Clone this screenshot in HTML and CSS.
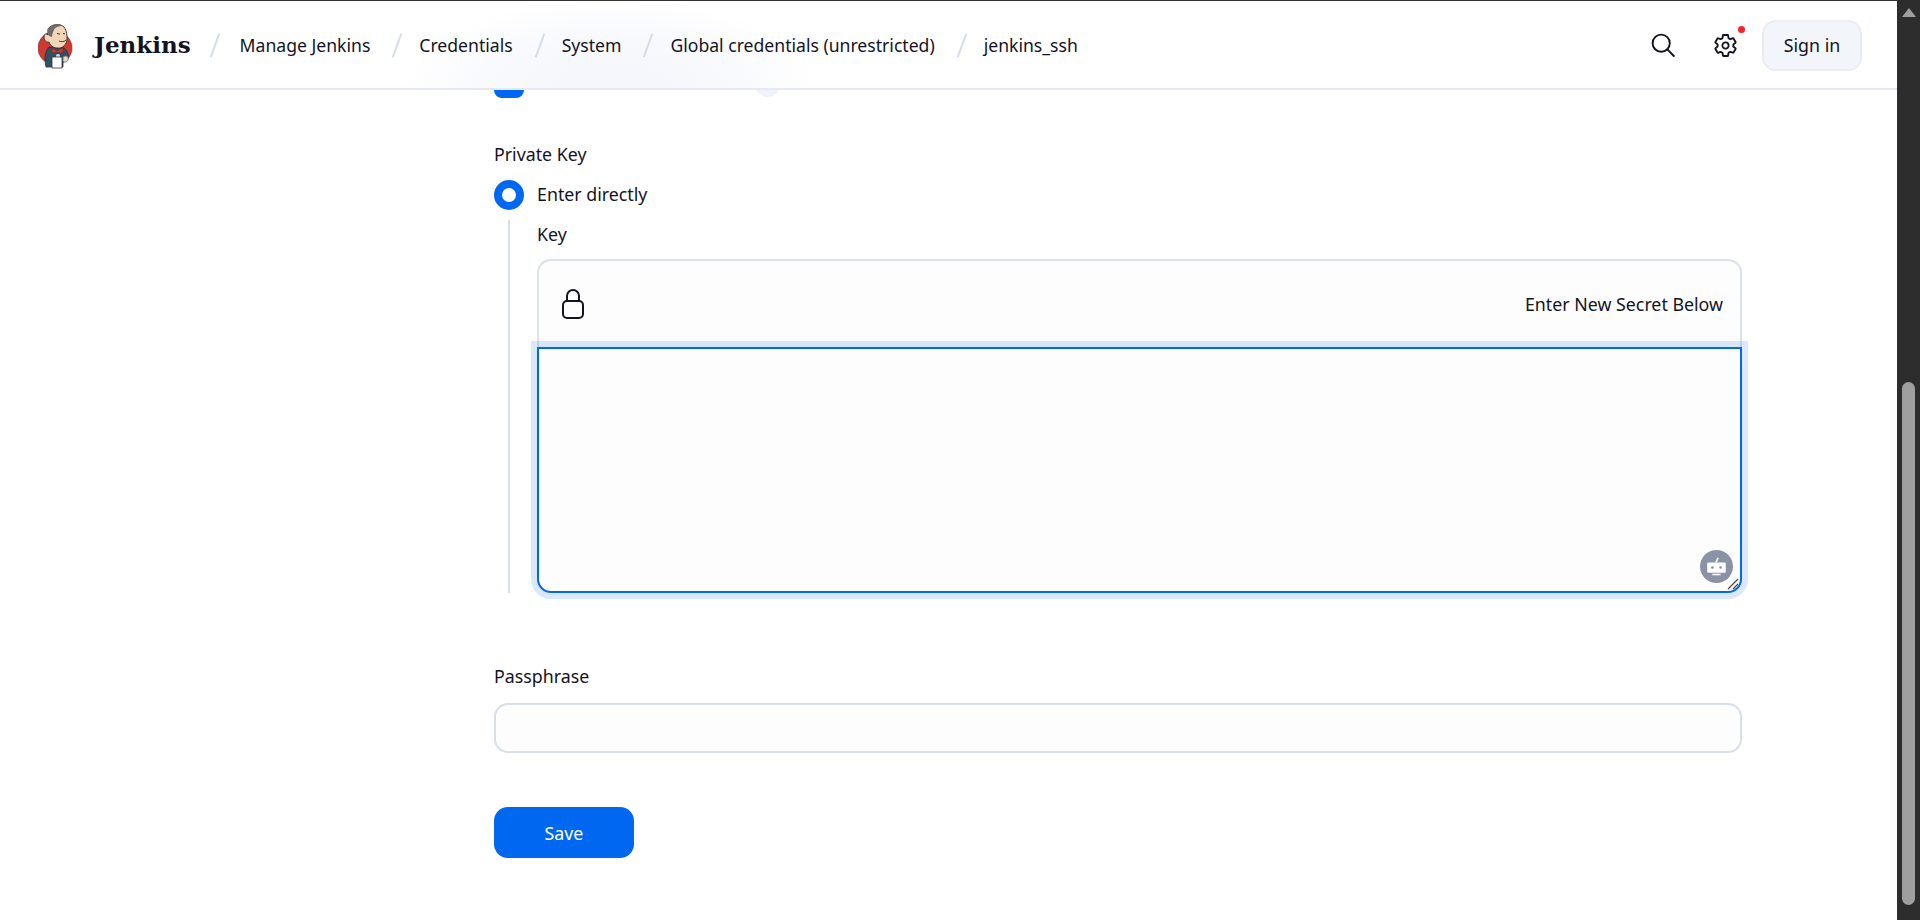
FILE: index.html
```html
<!DOCTYPE html>
<html lang="en">
<head>
    <meta charset="UTF-8">
    <meta name="viewport" content="width=device-width, initial-scale=1.0">
    <title>jenkins_ssh - Jenkins</title>
    <link rel="stylesheet" href="styles.css">
</head>
<body>
    <div class="page">
        <header class="top-nav">
            <svg class="logo" viewBox="0 0 36 48" aria-hidden="true">
                <ellipse cx="17" cy="27" rx="17" ry="16.5" fill="#d33833" stroke="#5a2a28" stroke-width="0.6"/>
                <path d="M8 46C6 38 7 30 11 26l15 1c4 3 5 8 4 11l-5 2v6z" fill="#335061" stroke="#26343e" stroke-width="0.8"/>
                <path d="M10 8c3-5 12-6 16-2 3 4 3 9 3 12 0 5-4 10-10 9-4 0-7-3-8-6-3 1-5-2-5-5 0-3 2-4 4-2z" fill="#f0d6b7" stroke="#2f2a28" stroke-width="0.9"/>
                <path d="M10 8c3-5 11-6 15-3-4 0-8 1-9 4-1 2-2 4-2 7l-3-1c-1-2-2-4-1-7z" fill="#6d6b6d"/>
                <path d="M19 12.5l3 .6M25 12.5l2 .3M21 20c2 1 5 1 7-1" fill="none" stroke="#3a2f2a" stroke-width="1"/>
                <path d="M14 27l5 3 6-3v5l-6-1-5 1z" fill="#d33833" stroke="#7a1f1c" stroke-width="0.5"/>
                <circle cx="20" cy="35" r="2" fill="#d9e1e8"/>
                <path d="M14 36h10v11H14z" fill="#fff" stroke="#333" stroke-width="0.8"/>
                <path d="M25 36c3-2 6-1 5 3-1 2-4 3-5 1z" fill="#f0d6b7" stroke="#49728b" stroke-width="0.8"/>
            </svg>
            <a class="brand" href="#">Jenkins</a>
            <nav class="crumbs">
                <a href="#">Manage Jenkins</a>
                <a href="#">Credentials</a>
                <a href="#">System</a>
                <a href="#">Global credentials (unrestricted)</a>
                <a href="#">jenkins_ssh</a>
            </nav>
            <div class="nav-actions">
                <svg class="nav-icon" viewBox="0 0 24 24" aria-hidden="true">
                    <circle cx="10.2" cy="10.2" r="8.6"/>
                    <path d="M16.6 16.6l6.2 6.4"/>
                </svg>
                <span class="gear">
                    <svg class="gear-icon" viewBox="0 0 512 512" aria-hidden="true">
                        <path d="M262.29 192.31a64 64 0 1 0 57.4 57.4 64.13 64.13 0 0 0-57.4-57.4zM416.39 256a154.34 154.34 0 0 1-1.53 20.79l45.21 35.46a10.81 10.81 0 0 1 2.45 13.75l-42.77 74a10.81 10.81 0 0 1-13.14 4.59l-44.9-18.08a16.11 16.11 0 0 0-15.17 1.75A164.48 164.48 0 0 1 325 400.8a15.94 15.94 0 0 0-8.82 12.14l-6.73 47.89a11.08 11.08 0 0 1-10.68 9.17h-85.54a11.11 11.11 0 0 1-10.69-8.87l-6.72-47.82a16.07 16.07 0 0 0-9-12.22 155.3 155.3 0 0 1-21.46-12.57 16 16 0 0 0-15.11-1.71l-44.89 18.07a10.81 10.81 0 0 1-13.14-4.58l-42.77-74a10.8 10.8 0 0 1 2.45-13.75l38.21-30a16.05 16.05 0 0 0 6-14.08c-.36-4.17-.58-8.33-.58-12.5s.21-8.27.58-12.35a16 16 0 0 0-6.07-13.94l-38.19-30A10.81 10.81 0 0 1 49.48 186l42.77-74a10.81 10.81 0 0 1 13.14-4.59l44.9 18.08a16.11 16.11 0 0 0 15.17-1.75A164.48 164.48 0 0 1 187 111.2a15.94 15.94 0 0 0 8.82-12.14l6.73-47.89A11.08 11.08 0 0 1 213.23 42h85.54a11.11 11.11 0 0 1 10.69 8.87l6.72 47.82a16.07 16.07 0 0 0 9 12.22 155.3 155.3 0 0 1 21.46 12.57 16 16 0 0 0 15.11 1.71l44.89-18.07a10.81 10.81 0 0 1 13.14 4.58l42.77 74a10.8 10.8 0 0 1-2.45 13.75l-38.21 30a16.05 16.05 0 0 0-6.05 14.08c.33 4.14.55 8.3.55 12.47z"/>
                    </svg>
                    <span class="gear-dot"></span>
                </span>
                <a class="sign-in" href="#">Sign in</a>
            </div>
        </header>

        <main class="form">
            <div class="clipped-row">
                <span class="checkbox"></span>
                <span class="help-dot"></span>
            </div>

            <label class="field-label private-key">Private Key</label>
            <div class="radio-row">
                <span class="radio"></span>
                <span class="radio-text">Enter directly</span>
            </div>
            <div class="radio-body">
                <label class="field-label">Key</label>
                <div class="secret-box">
                    <div class="secret-head">
                        <svg class="lock" viewBox="0 0 24 32" aria-hidden="true">
                            <path d="M6 13V8a6 6 0 0 1 12 0v5"/>
                            <rect x="2" y="13" width="20" height="17" rx="4"/>
                        </svg>
                        <span>Enter New Secret Below</span>
                    </div>
                    <div class="secret-input">
                        <textarea></textarea>
                        <span class="bot">
                            <svg viewBox="0 0 32 32" aria-hidden="true">
                                <path class="bot-stem" d="M15.5 12l2-4.5"/>
                                <rect class="bot-head" x="7" y="12" width="18" height="10" rx="1"/>
                                <circle class="bot-eye" cx="12" cy="17" r="1.3"/>
                                <circle class="bot-eye" cx="20" cy="17" r="1.3"/>
                                <rect class="bot-head" x="12" y="23" width="8" height="1.5"/>
                            </svg>
                        </span>
                        <svg class="grip" viewBox="0 0 12 12" aria-hidden="true">
                            <path d="M1 11L11 1M6 11l5-5"/>
                        </svg>
                    </div>
                </div>
            </div>

            <label class="field-label passphrase">Passphrase</label>
            <input class="text-input" type="text">

            <button class="save-btn" type="button">Save</button>
        </main>
    </div>

    <div class="scrollbar">
        <span class="scroll-up"></span>
        <span class="scroll-thumb"></span>
    </div>
</body>
</html>
```

FILE: styles.css
```css
* {
    box-sizing: border-box;
}
html, body {
    height: 100%;
    overflow: hidden;
}
body {
    margin: 0;
    display: flex;
    font-family: "Noto Sans", Arial, sans-serif;
    font-size: 17.8px;
    line-height: 24px;
    color: #14141f;
    background-color: #fff;
}
a {
    color: inherit;
    text-decoration: none;
}
.page {
    flex: 1;
    min-width: 0;
}

/* header */
.top-nav {
    display: flex;
    align-items: center;
    height: 90px;
    padding: 1px 35px 0 38px;
    border-top: 1px solid #333;
    border-bottom: 2px solid #e6e9f2;
    background: radial-gradient(ellipse 210px 90px at 610px 100%, #f4f6fc 0%, #f8f9fd 55%, #fff 100%);
}
.logo {
    width: 36px;
    height: 48px;
    margin-right: 20px;
}
.brand {
    font-family: "DejaVu Serif", Georgia, serif;
    font-size: 23px;
    font-weight: bold;
}
.crumbs {
    display: flex;
    margin-left: 19px;
    font-size: 17.6px;
}
.crumbs a {
    display: flex;
    align-items: center;
}
.crumbs a::before {
    content: "";
    width: 2px;
    height: 25px;
    margin: 0 24px 0 4px;
    background-color: #d3dcea;
    transform: rotate(20deg);
}
.crumbs a + a::before {
    margin: 0 21px 0 26px;
}
.nav-actions {
    display: flex;
    align-items: center;
    margin-left: auto;
}
.nav-icon {
    display: block;
    width: 24px;
    height: 24px;
    fill: none;
    stroke: #14141f;
    stroke-width: 1.9;
    stroke-linecap: round;
}
.gear {
    position: relative;
    margin-left: 38px;
}
.gear-icon {
    display: block;
    width: 25px;
    height: 25px;
    fill: none;
    stroke: #14141f;
    stroke-width: 38;
    stroke-linejoin: round;
}
.gear-dot {
    position: absolute;
    top: -7px;
    right: -7px;
    width: 7px;
    height: 7px;
    border-radius: 50%;
    background-color: #f5222d;
}
.sign-in {
    width: 100px;
    height: 51px;
    margin-left: 24px;
    line-height: 47px;
    text-align: center;
    background-color: #f2f5f9;
    border: 2px solid #e9edf3;
    border-radius: 14px;
}

/* form */
.form {
    display: flex;
    flex-direction: column;
    align-items: flex-start;
    width: 1248px;
    margin-left: 494px;
}
.clipped-row {
    display: flex;
    height: 8px;
    overflow: hidden;
}
.checkbox {
    width: 30px;
    height: 30px;
    margin-top: -22px;
    background-color: #0067f0;
    border-radius: 8px;
}
.help-dot {
    width: 25px;
    height: 25px;
    margin: -18px 0 0 231px;
    background-color: #eff2f7;
    border-radius: 50%;
}
.private-key {
    margin-top: 44px;
}
.radio-row {
    display: flex;
    align-items: center;
    gap: 13px;
    height: 30px;
    margin-top: 14px;
}
.radio {
    width: 30px;
    height: 30px;
    border: 8.5px solid #0067f0;
    border-radius: 50%;
    background-color: #fff;
}
.radio-text {
    margin-bottom: 2px;
}
.radio-body {
    width: 1234px;
    margin: 10px 0 0 14px;
    padding: 2px 0 0 27px;
    border-left: 2px solid #d8dfea;
}
.secret-box {
    margin-top: 13px;
}
.secret-head {
    display: flex;
    align-items: center;
    justify-content: space-between;
    height: 88px;
    padding: 0 17px 0 22px;
    background-color: #fdfdfd;
    border: 2px solid #dbe2ec;
    border-bottom: none;
    border-radius: 14px 14px 0 0;
}
.lock {
    width: 24px;
    height: 32px;
    fill: none;
    stroke: #14141f;
    stroke-width: 2;
}
.secret-input {
    position: relative;
    height: 246px;
}
.secret-input textarea {
    display: block;
    width: 100%;
    height: 100%;
    background-color: #fdfdfd;
    border: 2px solid #0067f0;
    border-radius: 0 0 14px 14px;
    box-shadow: 0 0 0 6px rgba(0, 103, 240, 0.15);
    outline: none;
    resize: none;
}
.bot {
    position: absolute;
    right: 9px;
    bottom: 10px;
    width: 33px;
    height: 33px;
    border-radius: 50%;
    background-color: #8a93a5;
}
.bot svg {
    display: block;
}
.bot-head {
    fill: #fff;
}
.bot-eye {
    fill: #8a93a5;
}
.bot-stem {
    fill: none;
    stroke: #fff;
    stroke-width: 1.6;
}
.grip {
    position: absolute;
    right: 3px;
    bottom: 3px;
    width: 12px;
    height: 12px;
    fill: none;
    stroke: #4a4a4a;
    stroke-width: 1.2;
}
.passphrase {
    margin-top: 71px;
}
.text-input {
    width: 100%;
    height: 50px;
    margin-top: 15px;
    background-color: #fdfdfd;
    border: 2px solid #d9deeb;
    border-radius: 14px;
}
.save-btn {
    width: 140px;
    height: 51px;
    margin-top: 54px;
    font-family: inherit;
    font-size: 17.8px;
    color: #fff;
    background-color: #0067f0;
    border: none;
    border-radius: 14px;
}

/* window scrollbar */
.scrollbar {
    display: flex;
    flex-direction: column;
    align-items: center;
    width: 23px;
    padding-top: 8px;
    background-color: #2d2d2d;
}
.scroll-up {
    width: 0;
    height: 0;
    border-left: 7px solid transparent;
    border-right: 7px solid transparent;
    border-bottom: 9px solid #9f9f9f;
}
.scroll-thumb {
    width: 13px;
    height: 523px;
    margin-top: 365px;
    background-color: #9f9f9f;
    border-radius: 7px;
}
```
